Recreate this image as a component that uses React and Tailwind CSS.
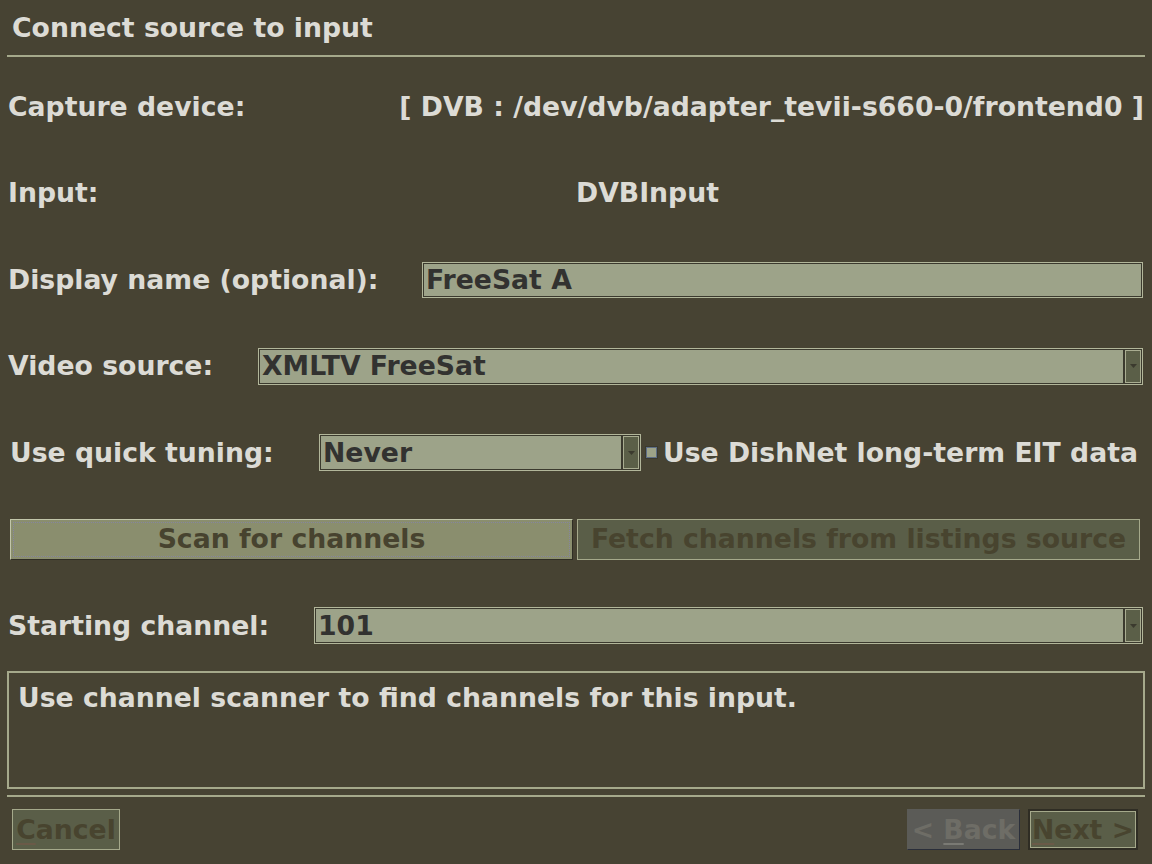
import React from 'react';

function Select({ value, className }) {
  return (
    <div className={`flex h-[37px] border border-[#b2b69a] bg-[#3b3a2e] p-px ${className}`}>
      <div className="flex flex-1 items-center bg-[#9da389] pl-[2px] text-[#323230]">{value}</div>
      <div className="ml-[2px] flex w-[16px] items-center justify-center border border-[#a9ad91] bg-[#5b5f48]">
        <svg width="7" height="4" viewBox="0 0 7 4">
          <path d="M0 0h7L3.5 4z" fill="#3b3a2e" />
        </svg>
      </div>
    </div>
  );
}

function Row({ h, children, className = '' }) {
  return <div className={`flex items-center ${h} ${className}`}>{children}</div>;
}

export default function App() {
  return (
    <div
      className="w-[1152px] h-[864px] overflow-hidden bg-[#474333] text-[26.7px] font-bold leading-[30px] text-[#dcdbd5]"
      style={{ fontFamily: '"DejaVu Sans", "Liberation Sans", sans-serif' }}
    >
      {/* Title */}
      <div className="flex h-[55px] items-center pl-[12px]">Connect source to input</div>
      <div className="mx-[7px] h-[2px] bg-[#a5a98b]" />

      <div className="mt-[6px]">
        <Row h="h-[87px]" className="justify-between pl-[8px] pr-[8px]">
          <span>Capture device:</span>
          <span>[ DVB : /dev/dvb/adapter_tevii-s660-0/frontend0 ]</span>
        </Row>

        <Row h="h-[86px]" className="pl-[8px]">
          <span className="w-[568px]">Input:</span>
          <span>DVBInput</span>
        </Row>

        <Row h="h-[87px]" className="pl-[8px]">
          <span className="w-[414px]">Display name (optional):</span>
          <div className="flex h-[36px] w-[721px] border border-[#b2b69a] bg-[#3b3a2e] p-px">
            <div className="flex flex-1 items-center bg-[#9da389] pl-[2px] text-[#323230]">FreeSat A</div>
          </div>
        </Row>

        <Row h="h-[86px]" className="pl-[8px]">
          <span className="w-[250px]">Video source:</span>
          <Select value="XMLTV FreeSat" className="w-[885px]" />
        </Row>

        <Row h="h-[87px]" className="pl-[10px]">
          <span className="w-[309px]">Use quick tuning:</span>
          <Select value="Never" className="w-[322px]" />
          <div className="ml-[4px] flex h-[13px] w-[13px] items-center justify-center bg-[#3b3a2e]">
            <div className="h-[11px] w-[11px] border border-[#5e6e86] bg-[#9da389]" />
          </div>
          <span className="ml-[5px]">Use DishNet long-term EIT data</span>
        </Row>

        <Row h="h-[86px]" className="gap-[4px] pl-[10px]">
          <div className="flex h-[41px] w-[563px] border border-t-[#c2c6aa] border-l-[#c2c6aa] border-b-[#2f2d24] border-r-[#2f2d24] bg-[#8a8e6e] p-[2px]">
            <div className="flex flex-1 items-center justify-center border border-dotted border-[#8585a0] text-[#47432f]">
              Scan for channels
            </div>
          </div>
          <div className="flex h-[41px] w-[563px] items-center justify-center border border-[#a5a98b] bg-[#5a5e48] text-[#48442f]">
            Fetch channels from listings source
          </div>
        </Row>

        <Row h="h-[87px]" className="pl-[8px]">
          <span className="w-[306px]">Starting channel:</span>
          <Select value="101" className="w-[829px]" />
        </Row>
      </div>

      {/* Help text */}
      <div className="mx-[7px] mt-[2px] h-[118px] border-2 border-[#a5a98b] pl-[9px] pt-[10px]">
        Use channel scanner to find channels for this input.
      </div>

      <div className="mx-[7px] mt-[6px] h-[2px] bg-[#a5a98b]" />

      {/* Buttons */}
      <div className="mt-[12px] flex items-center pl-[12px] pr-[14px]">
        <div className="flex h-[41px] w-[108px] items-center justify-center border border-[#a5a98b] bg-[#5a5e48] text-[#48442f]">
          <span><span className="underline decoration-[#6a5a48] decoration-2 underline-offset-4">C</span>ancel</span>
        </div>
        <div className="flex-1" />
        <div className="flex h-[41px] w-[113px] items-center justify-center border border-[#5b5b57] border-b-[#2a2e3a] border-r-[#2a2e3a] bg-[#5b5b57] text-[#6e6d66]">
          <span>&lt; <span className="underline decoration-[#7a7a74] decoration-2 underline-offset-4">B</span>ack</span>
        </div>
        <div className="ml-[8px] flex h-[41px] w-[110px] items-center justify-center border-2 border-[#2f2d24] bg-[#a5a98b] p-px">
          <div className="flex h-full w-full items-center justify-center bg-[#5a5e48] text-[#48442f]">
            <span><span className="underline decoration-[#6a5a48] decoration-2 underline-offset-4">N</span>ext &gt;</span>
          </div>
        </div>
      </div>
    </div>
  );
}
